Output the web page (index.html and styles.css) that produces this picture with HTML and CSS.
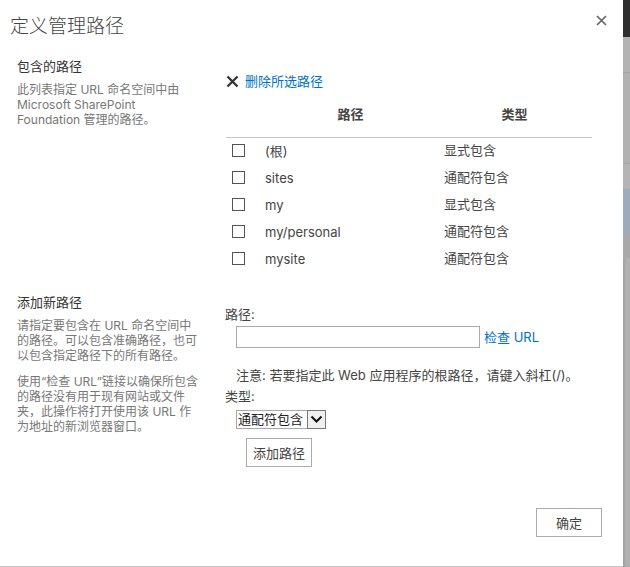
FILE: index.html
```html
<!DOCTYPE html>
<html lang="zh-CN">
<head>
<meta charset="utf-8">
<title>定义管理路径</title>
<link rel="stylesheet" href="styles.css">
</head>
<body>
<div class="dialog">
  <div class="titlebar">
    <h1 class="title">定义管理路径</h1>
    <span class="close"><svg width="11" height="11" viewBox="0 0 11 11"><path d="M1 1L10 10M10 1L1 10" stroke="#666" stroke-width="1.7" fill="none"/></svg></span>
  </div>

  <div class="section s1">
    <div class="side">
      <h2 class="side-title">包含的路径</h2>
      <p class="desc">此列表指定 URL 命名空间中由<br>Microsoft SharePoint<br>Foundation 管理的路径。</p>
    </div>
    <div class="main">
      <a class="del" href="#"><svg class="del-icon" width="13" height="13" viewBox="0 0 13 13"><path d="M1.5 1.5L11.5 11.5M11.5 1.5L1.5 11.5" stroke="#333" stroke-width="2.3" fill="none"/></svg><span class="link">删除所选路径</span></a>
      <table class="paths">
        <thead>
          <tr><th class="c-check"></th><th class="c-path">路径</th><th class="c-type">类型</th></tr>
        </thead>
        <tbody>
          <tr><td class="c-check"><input type="checkbox" class="cb"></td><td class="c-path">(根)</td><td class="c-type">显式包含</td></tr>
          <tr><td class="c-check"><input type="checkbox" class="cb"></td><td class="c-path">sites</td><td class="c-type">通配符包含</td></tr>
          <tr><td class="c-check"><input type="checkbox" class="cb"></td><td class="c-path">my</td><td class="c-type">显式包含</td></tr>
          <tr><td class="c-check"><input type="checkbox" class="cb"></td><td class="c-path">my/personal</td><td class="c-type">通配符包含</td></tr>
          <tr><td class="c-check"><input type="checkbox" class="cb"></td><td class="c-path">mysite</td><td class="c-type">通配符包含</td></tr>
        </tbody>
      </table>
    </div>
  </div>

  <div class="section s2">
    <div class="side">
      <h2 class="side-title">添加新路径</h2>
      <p class="desc">请指定要包含在 URL 命名空间中<br>的路径。可以包含准确路径，也可<br>以包含指定路径下的所有路径。</p>
      <p class="desc para">使用“检查 URL”链接以确保所包含<br>的路径没有用于现有网站或文件<br>夹，此操作将打开使用该 URL 作<br>为地址的新浏览器窗口。</p>
    </div>
    <div class="main">
      <div class="label first">路径:</div>
      <div class="input-row">
        <input type="text" class="text-input">
        <a class="link check" href="#">检查 URL</a>
      </div>
      <div class="note">注意: 若要指定此 Web 应用程序的根路径，请键入斜杠(/)。</div>
      <div class="label">类型:</div>
      <div class="select">
        <span class="select-text">通配符包含</span>
        <span class="select-arrow"><svg width="13" height="9" viewBox="0 0 13 9"><path d="M1.5 1.5L6.5 6.5L11.5 1.5" stroke="#111" stroke-width="2" fill="none"/></svg></span>
      </div>
      <button class="btn add">添加路径</button>
    </div>
  </div>

  <div class="footer">
    <button class="btn ok">确定</button>
  </div>
</div>
<div class="strip">
  <div class="strip-top"></div>
  <div class="strip-a"></div>
  <div class="strip-b"></div>
  <div class="strip-c"></div>
  <div class="strip-d"></div>
  <div class="strip-e"></div>
</div>
</body>
</html>
```

FILE: styles.css
```css
* { box-sizing: border-box; }

html, body {
  margin: 0;
  padding: 0;
  background: #ffffff;
}

body {
  display: flex;
  width: 630px;
  height: 567px;
  overflow: hidden;
  font-family: "Inter", "Noto Sans CJK SC", sans-serif;
  color: #444;
}

.dialog {
  width: 623px;
  height: 567px;
  background: #fff;
  border-bottom: 1px solid #c6c6c6;
  display: flex;
  flex-direction: column;
}

.titlebar {
  display: flex;
  justify-content: space-between;
  align-items: flex-start;
  padding: 12px 16px 0 10px;
}

.title {
  margin: 0;
  font-size: 19px;
  line-height: 30px;
  font-weight: 300;
  color: #444;
}

.close {
  display: block;
  margin-top: 3px;
  width: 11px;
  height: 11px;
}
.close svg { display: block; }

.section {
  display: grid;
  grid-template-columns: 209px 366px;
  padding-left: 17px;
}
.s1 { margin-top: 14px; }
.s2 { margin-top: 20px; }

.side-title {
  margin: 0;
  font-size: 13px;
  line-height: 20px;
  font-weight: normal;
  color: #333;
}

.desc {
  margin: 6px 0 0;
  font-size: 12px;
  line-height: 15px;
  color: #777;
  white-space: nowrap;
}
.desc.para { margin-top: 11px; }

.link {
  color: #0072c6;
  text-decoration: none;
  font-size: 13px;
}

.del {
  display: flex;
  align-items: center;
  margin-top: 16px;
  height: 18px;
  text-decoration: none;
}
.del-icon { display: block; margin-right: 6px; }
.del .link { line-height: 18px; }

.paths {
  width: 366px;
  border-collapse: collapse;
  font-size: 13px;
}
.paths th {
  height: 47px;
  padding: 0;
  border-bottom: 1px solid #c6c6c6;
  font-weight: bold;
  color: #444;
  text-align: center;
  vertical-align: middle;
}
.paths td {
  height: 27px;
  padding: 0;
  vertical-align: middle;
  color: #444;
}
.c-check { width: 38px; }
.paths td.c-check { padding-left: 6px; }
.c-path { width: 173px; }
.paths td.c-path { padding-left: 1px; }
.paths td.c-type { padding-left: 7px; padding-bottom: 3px; }

.cb {
  appearance: none;
  -webkit-appearance: none;
  display: block;
  margin: 0;
  width: 13px;
  height: 13px;
  border: 1px solid #555;
  background: #fff;
}

.label {
  font-size: 13px;
  line-height: 18px;
  color: #444;
  margin-top: 3px;
  margin-left: -1px;
}
.label.first { margin-top: 13px; }

.input-row {
  display: flex;
  align-items: center;
  margin-top: 3px;
  margin-left: 10px;
}
.text-input {
  width: 244px;
  height: 22px;
  margin: 0;
  border: 1px solid #ababab;
  background: #fff;
  outline: none;
}
.check { margin-left: 4px; line-height: 18px; }

.note {
  margin-top: 18px;
  margin-left: 10px;
  font-size: 13px;
  line-height: 18px;
  color: #444;
  white-space: nowrap;
}

.select {
  display: flex;
  width: 90px;
  height: 19px;
  margin-top: 5px;
  margin-left: 10px;
  border: 1px solid #a9a9a9;
  background: #fff;
}
.select-text {
  flex: 1;
  font-size: 13px;
  line-height: 17px;
  padding-left: 1px;
  color: #222;
  white-space: nowrap;
}
.select-arrow {
  width: 19px;
  height: 19px;
  margin: -1px -1px 0 0;
  border: 1px solid #777;
  background: #f0f0f0;
  display: flex;
  align-items: center;
  justify-content: center;
}
.select-arrow svg { display: block; }

.btn {
  display: block;
  width: 66px;
  height: 29px;
  padding: 0;
  border: 1px solid #ababab;
  background: #fff;
  font-family: "Inter", "Noto Sans CJK SC", sans-serif;
  font-size: 13px;
  color: #444;
}
.add { margin-top: 9px; margin-left: 20px; }

.footer {
  margin-top: auto;
  display: flex;
  justify-content: flex-end;
  padding: 0 21px 29px 0;
}

.strip {
  flex: 1;
  display: flex;
  flex-direction: column;
  background: #b1b1b1;
  box-shadow: inset 2px 0 2px rgba(0,0,0,0.08);
}
.strip-top { height: 37px; background: #2f2f2f; }
.strip-a { height: 36px; background: #b3b3b3; border-bottom: 1px solid #a4a4a4; }
.strip-b { height: 91px; background: #b2b2b2; border-bottom: 1px solid #a6a6a6; }
.strip-c { height: 25px; background: #b4b4b4; }
.strip-d { height: 45px; background: #9eabbb; }
.strip-e { height: 24px; background: #a9a9a9; }
```
